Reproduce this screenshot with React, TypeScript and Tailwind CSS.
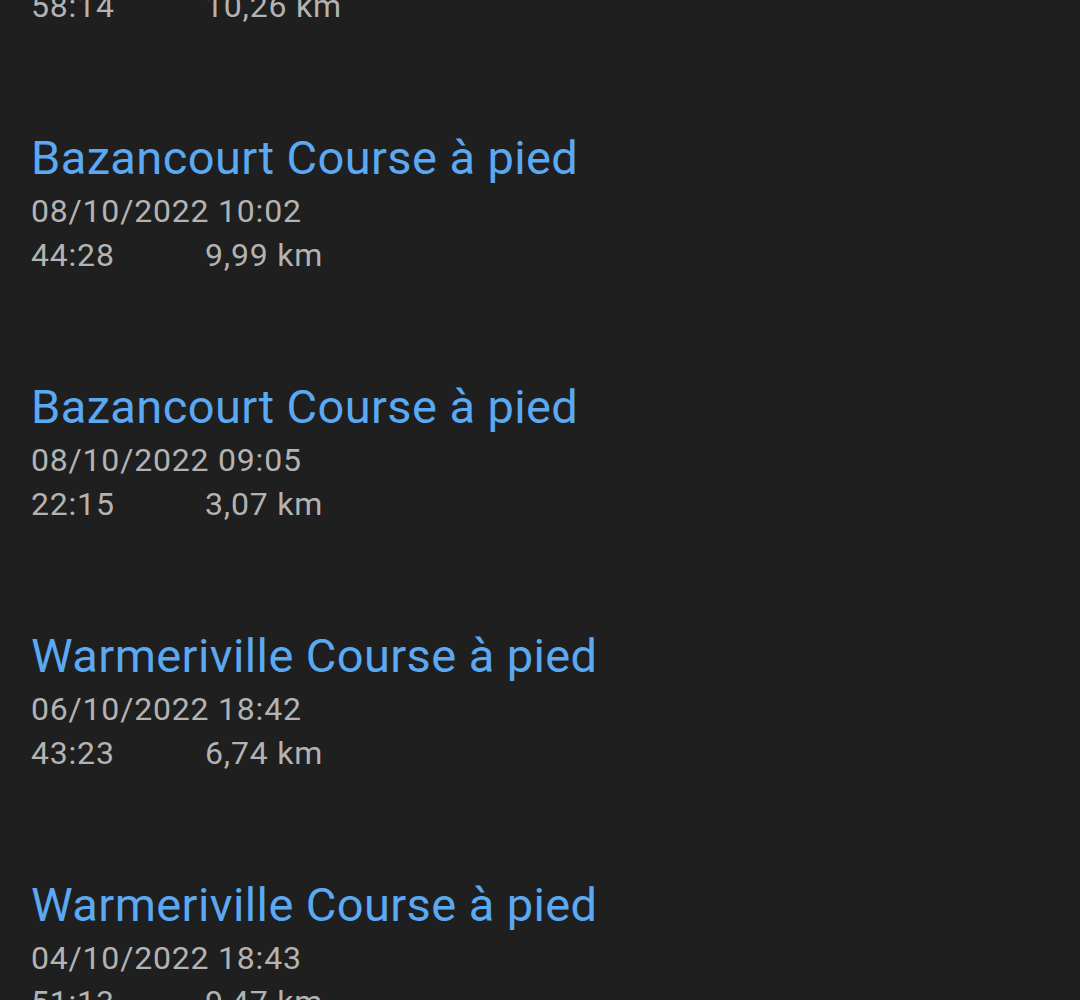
import React from "react";

type Activity = {
  title: string;
  date: string;
  duration: string;
  distance: string;
};

const activities: Activity[] = [
  { title: "Bazancourt Course à pied", date: "09/10/2022 09:31", duration: "58:14", distance: "10,26 km" },
  { title: "Bazancourt Course à pied", date: "08/10/2022 10:02", duration: "44:28", distance: "9,99 km" },
  { title: "Bazancourt Course à pied", date: "08/10/2022 09:05", duration: "22:15", distance: "3,07 km" },
  { title: "Warmeriville Course à pied", date: "06/10/2022 18:42", duration: "43:23", distance: "6,74 km" },
  { title: "Warmeriville Course à pied", date: "04/10/2022 18:43", duration: "51:13", distance: "9,47 km" },
];

function ActivityItem({ activity }: { activity: Activity }) {
  return (
    <div className="flex flex-col pl-[31px] h-[249px]">
      <p className="text-[47px] leading-[52px] tracking-[0.4px] text-[#5aa9f2] whitespace-nowrap">{activity.title}</p>
      <p className="mt-[5px] text-[32px] leading-[44px] tracking-[0.8px] text-[#b3b3b3]">{activity.date}</p>
      <div className="flex text-[32px] leading-[45px] tracking-[0.8px] text-[#b3b3b3]">
        <span className="w-[174px]">{activity.duration}</span>
        <span>{activity.distance}</span>
      </div>
    </div>
  );
}

export default function App() {
  return (
    <div
      className="w-[1080px] h-[1000px] overflow-hidden bg-[#1f1f1f]"
      style={{ fontFamily: "Roboto, 'Noto Sans', sans-serif" }}
    >
      {/* activity list, scrolled so the first item is cut off */}
      <div className="flex flex-col mt-[-117px]">
        {activities.map((a, i) => (
          <ActivityItem activity={a} key={i} />
        ))}
      </div>
    </div>
  );
}
